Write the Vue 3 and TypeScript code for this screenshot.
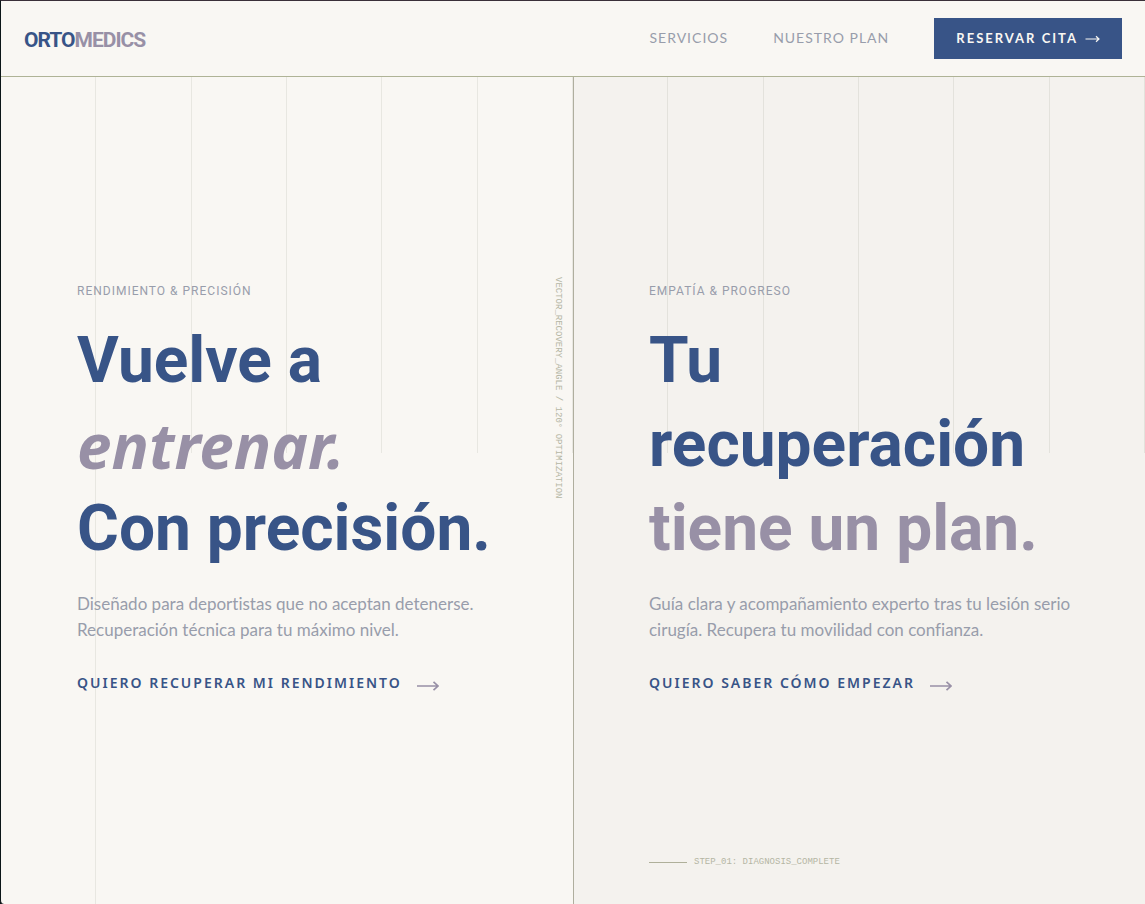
<script setup lang="ts">
interface Panel {
  id: string
  eyebrow: string
  lines: { text: string; tone: 'primary' | 'accent'; italic?: boolean }[]
  copy: string[]
  cta: string
}

const links: string[] = ['Servicios', 'Nuestro Plan']

const panels: Panel[] = [
  {
    id: 'rendimiento',
    eyebrow: 'RENDIMIENTO & PRECISIÓN',
    lines: [
      { text: 'Vuelve a', tone: 'primary' },
      { text: 'entrenar.', tone: 'accent', italic: true },
      { text: 'Con precisión.', tone: 'primary' },
    ],
    copy: [
      'Diseñado para deportistas que no aceptan detenerse.',
      'Recuperación técnica para tu máximo nivel.',
    ],
    cta: 'QUIERO RECUPERAR MI RENDIMIENTO',
  },
  {
    id: 'progreso',
    eyebrow: 'EMPATÍA & PROGRESO',
    lines: [
      { text: 'Tu', tone: 'primary' },
      { text: 'recuperación', tone: 'primary' },
      { text: 'tiene un plan.', tone: 'accent' },
    ],
    copy: [
      'Guía clara y acompañamiento experto tras tu lesión serio',
      'cirugía. Recupera tu movilidad con confianza.',
    ],
    cta: 'QUIERO SABER CÓMO EMPEZAR',
  },
]
</script>

<template>
  <div class="page">
    <div class="guides" aria-hidden="true">
      <span v-for="n in 13" :key="n"></span>
    </div>

    <header class="bar">
      <a class="logo" href="#">ORTO<span>MEDICS</span></a>
      <nav class="nav">
        <a v-for="link in links" :key="link" class="nav-link" href="#">{{ link }}</a>
        <button class="book" type="button">
          <span>RESERVAR CITA</span>
          <svg width="15" height="8" viewBox="0 0 15 8" fill="none" stroke="currentColor" stroke-width="1.2">
            <path d="M0.5 4H14M11 1.2L14 4L11 6.8" />
          </svg>
        </button>
      </nav>
    </header>

    <main class="split">
      <section v-for="panel in panels" :key="panel.id" class="panel" :class="panel.id">
        <p class="eyebrow">{{ panel.eyebrow }}</p>
        <h1 class="title">
          <span v-for="line in panel.lines" :key="line.text" :class="[line.tone, { italic: line.italic }]">{{ line.text }}</span>
        </h1>
        <p class="copy">
          <span v-for="row in panel.copy" :key="row">{{ row }}</span>
        </p>
        <a class="cta" href="#">
          <span>{{ panel.cta }}</span>
          <svg width="22" height="10" viewBox="0 0 22 10" fill="none" stroke="currentColor" stroke-width="1.7">
            <path d="M0 5H21M16.5 0.8L21 5L16.5 9.2" />
          </svg>
        </a>
        <p v-if="panel.id === 'rendimiento'" class="vector">VECTOR_RECOVERY_ANGLE / 120° OPTIMIZATION</p>
        <p v-else class="step">STEP_01: DIAGNOSIS_COMPLETE</p>
      </section>
    </main>
  </div>
</template>

<style>
body {
  margin: 0;
  background: #0b1517;
}
</style>

<style scoped>
.page {
  position: relative;
  display: flex;
  flex-direction: column;
  box-sizing: border-box;
  min-height: 100vh;
  border-top: 1px solid #3a3039;
  border-left: 1px solid #0b1517;
  border-bottom-left-radius: 4px;
  background: #f9f7f3;
  font-family: "Noto Sans", "Open Sans", sans-serif;
  color: #385487;
}

.guides {
  position: absolute;
  inset: 0;
  display: grid;
  grid-template-columns: repeat(12, 1fr);
  grid-template-rows: 1fr 1fr;
  pointer-events: none;
}

.guides span {
  border-right: 1px solid #e8e7e1;
}

.bar {
  position: relative;
  display: flex;
  align-items: center;
  justify-content: space-between;
  height: 75px;
  padding: 0 23px;
  border-bottom: 1px solid #afb396;
  background: #f9f7f3;
}

a {
  color: inherit;
  text-decoration: none;
}

.logo {
  padding-top: 2px;
  font: 700 21px/30px Roboto, sans-serif;
  letter-spacing: -1px;
}

.logo span,
.accent {
  color: #9890a6;
}

.nav {
  display: flex;
  align-items: center;
  gap: 45px;
}

.nav-link {
  padding-bottom: 2px;
  font: 400 14px/20px Lato, sans-serif;
  letter-spacing: 1px;
  text-transform: uppercase;
  color: #989dab;
}

.book {
  display: flex;
  align-items: center;
  gap: 7px;
  height: 41px;
  padding: 0 22px;
  border: 0;
  border-radius: 0;
  background: #385487;
  color: #f9f7f3;
  font: 700 13px/20px Lato, sans-serif;
  letter-spacing: 2px;
}

.book span {
  padding-bottom: 2px;
}

.split {
  position: relative;
  display: grid;
  flex: 1;
  grid-template-columns: repeat(2, minmax(0, 1fr));
}

.panel {
  position: relative;
  display: flex;
  flex-direction: column;
  align-items: flex-start;
  justify-content: center;
  padding: 0 75px 2px;
}

.rendimiento {
  padding-left: 76px;
}

.progreso {
  border-left: 1px solid #afae9e;
  background: rgba(0, 0, 0, 0.02);
}

.eyebrow {
  margin: 0 0 20px;
  font: 400 12px/15px Roboto, sans-serif;
  letter-spacing: 1px;
  color: #989dab;
}

.title {
  margin: 0;
  font: 700 64px/84px Roboto, sans-serif;
}

.title span,
.copy span {
  display: block;
  white-space: nowrap;
}

.title .italic {
  font-family: "Noto Sans", sans-serif;
  font-size: 62px;
  font-style: italic;
}

.copy {
  margin: 20px 0 0;
  font: 400 17px/26px Lato, sans-serif;
  font-variant-ligatures: none;
  color: #989dab;
}

.cta {
  display: flex;
  align-items: center;
  gap: 15px;
  margin-top: 28px;
  font-size: 14px;
  font-weight: 600;
  line-height: 24px;
  letter-spacing: 2px;
}

.cta svg {
  margin-top: 6px;
  color: #9890a6;
}

.vector,
.step {
  position: absolute;
  margin: 0;
  font: 400 9px/12px "Liberation Mono", monospace;
  color: #b5b6a4;
}

.vector {
  top: 200px;
  right: 9px;
  writing-mode: vertical-rl;
}

.step {
  display: flex;
  align-items: center;
  gap: 7px;
  bottom: 36px;
  left: 75px;
}

.step::before {
  content: "";
  width: 38px;
  height: 1px;
  background: #afb09a;
}
</style>
